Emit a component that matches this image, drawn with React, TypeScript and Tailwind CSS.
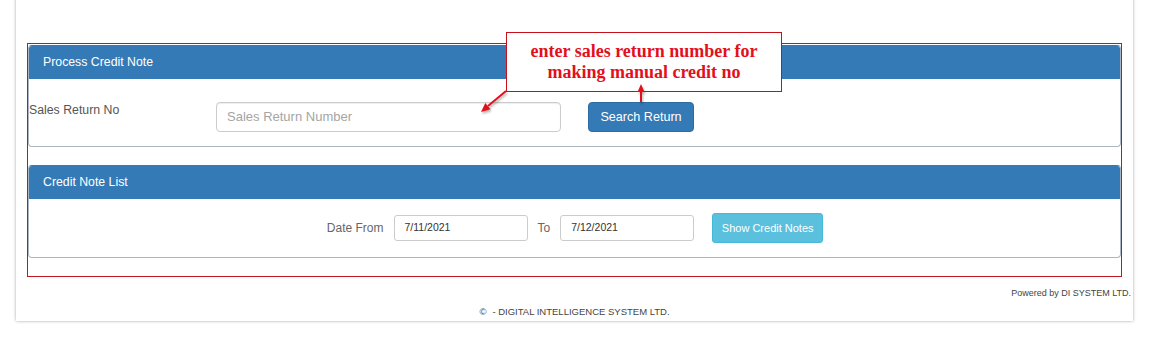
import React from "react";

export default function App() {
  return (
    <div className="relative h-[345px] w-[1153px] overflow-hidden bg-white font-['Liberation_Sans',Arial,sans-serif]">
      {/* main card */}
      <div className="ml-[16px] -mt-[10px] w-[1117px] bg-white pt-[53px] pb-[3px] shadow-[0_0_3px_rgba(0,0,0,0.35)]">
        {/* red annotation frame */}
        <div className="ml-[11px] w-[1095px] border border-[#c0161e] pt-[1px] pb-[18px]">
          {/* Panel 1 */}
          <div className="mb-[18px] rounded-[4px] border border-[#aab6c5] border-t-[#337ab7] bg-white">
            <div className="flex h-[33px] items-center rounded-t-[3px] bg-[#337ab7] pl-[14px] text-[12.3px] text-white">
              Process Credit Note
            </div>
            <div className="flex items-start pt-[23px] pb-[14px]">
              <div className="w-[187px] pt-[1px] text-[12.3px] leading-[14px] text-[#555]">
                Sales Return No
              </div>
              <div className="flex h-[30px] w-[345px] items-center rounded-[4px] border border-[#ccc] pl-[10px] text-[13px] text-[#a5a5a5] shadow-[inset_0_1px_1px_rgba(0,0,0,0.075)]">
                Sales Return Number
              </div>
              <div className="ml-[27px] flex h-[30px] w-[106px] items-center justify-center rounded-[4px] border border-[#2e6da4] bg-[#337ab7] text-[12.6px] text-white">
                Search Return
              </div>
            </div>
          </div>

          {/* Panel 2 */}
          <div className="rounded-[4px] border border-[#aab6c5] border-t-[#337ab7] bg-white">
            <div className="flex h-[33px] items-center rounded-t-[3px] bg-[#337ab7] pl-[14px] text-[12.3px] text-white">
              Credit Note List
            </div>
            <div className="flex items-center justify-center pt-[14px] pb-[14px] pl-[1px]">
              <span className="mr-[10px] text-[12px] text-[#666]">Date From</span>
              <div className="flex h-[26px] w-[134px] items-center rounded-[3px] border border-[#ccc] pl-[10px] text-[10.5px] text-[#333]">
                7/11/2021
              </div>
              <span className="mx-[10px] text-[12px] text-[#666]">To</span>
              <div className="flex h-[26px] w-[134px] items-center rounded-[3px] border border-[#ccc] pl-[10px] text-[10.5px] text-[#333]">
                7/12/2021
              </div>
              <div className="ml-[18px] flex h-[30px] w-[111px] items-center justify-center rounded-[3px] border border-[#46b8da] bg-[#5bc0de] text-[11px] text-white">
                Show Credit Notes
              </div>
            </div>
          </div>
        </div>

        {/* footer */}
        <div className="mt-[10px] pr-[2px] text-right text-[9px] leading-[12px] text-[#444]">
          Powered by DI SYSTEM LTD.
        </div>
        <div className="mt-[7px] text-center text-[9.5px] leading-[12px] text-[#444]">
          <span className="mr-[6px]">©</span>- DIGITAL INTELLIGENCE SYSTEM LTD.
        </div>
      </div>

      {/* callout annotation */}
      <div className="absolute left-[506px] top-[32px] w-[276px] border border-[#c8101a] bg-white py-[8px] text-center font-['Liberation_Serif','Times_New_Roman',serif] text-[18px] font-bold leading-[21px] text-[#e3101c]">
        enter sales return number for
        <br />
        making manual credit no
      </div>

      {/* arrows */}
      <svg
        className="pointer-events-none absolute left-0 top-0 drop-shadow-[1px_2px_1px_rgba(0,0,0,0.3)]"
        width="1153"
        height="345"
        viewBox="0 0 1153 345"
      >
        <line x1="506" y1="91" x2="488" y2="106" stroke="#e3101c" strokeWidth="2" />
        <polygon points="481,112 490.5,109.3 485.3,103.1" fill="#e3101c" />
        <line x1="641" y1="91" x2="641" y2="102" stroke="#e3101c" strokeWidth="2" />
        <polygon points="641,84 637.5,92 644.5,92" fill="#e3101c" />
      </svg>
    </div>
  );
}
